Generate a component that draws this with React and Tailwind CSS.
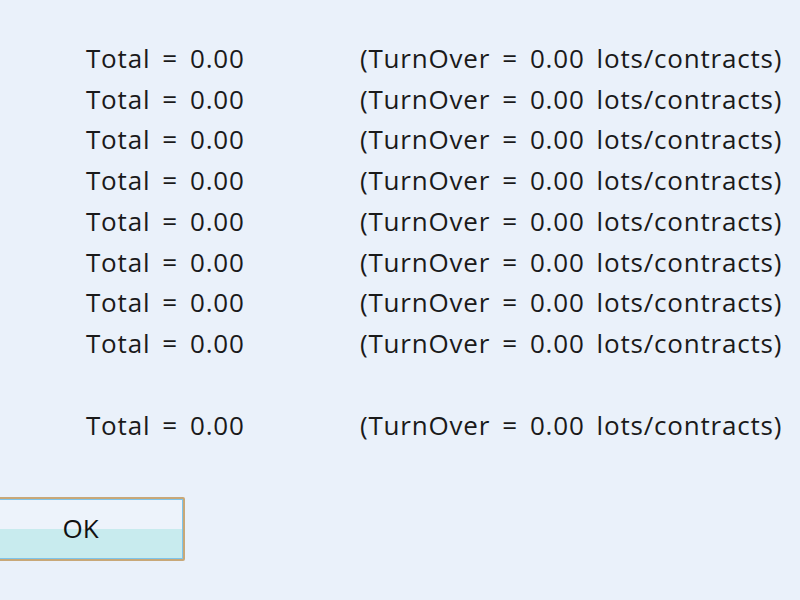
import React from 'react';

const rows = [0, 1, 2, 3, 4, 5, 6, 7];

function Row({ blank }) {
    return (
        <div className={`flex h-[40.75px] items-center ${blank ? 'invisible' : ''}`}>
            <span className="w-[274px]">Total = 0.00</span>
            <span>(TurnOver = 0.00 lots/contracts)</span>
        </div>
    );
}

export default function App() {
    return (
        <div
            className="w-[800px] h-[600px] overflow-hidden bg-[#eaf1fa] text-[#1a1a1a] text-[26px] tracking-[0.8px] [word-spacing:4.5px]"
            style={{ fontFamily: '"Open Sans", "Noto Sans", sans-serif' }}
        >
            <div className="pl-[86px] pt-[38px] whitespace-nowrap">
                {rows.map((i) => <Row key={i} />)}
                <Row blank />
                <Row />
            </div>
            <div className="relative mt-[51px] ml-[-24px] w-[209px] h-[64px] border-2 border-[#c8a878] rounded-[2px]">
                <div className="h-full border border-[#7ec4ea] flex flex-col">
                    <div className="flex-1 bg-[#edf3fb]" />
                    <div className="flex-1 bg-[#c8ebee]" />
                </div>
                <span className="absolute inset-0 flex items-center justify-center text-[26px] tracking-normal text-[#111]">OK</span>
            </div>
        </div>
    );
}
